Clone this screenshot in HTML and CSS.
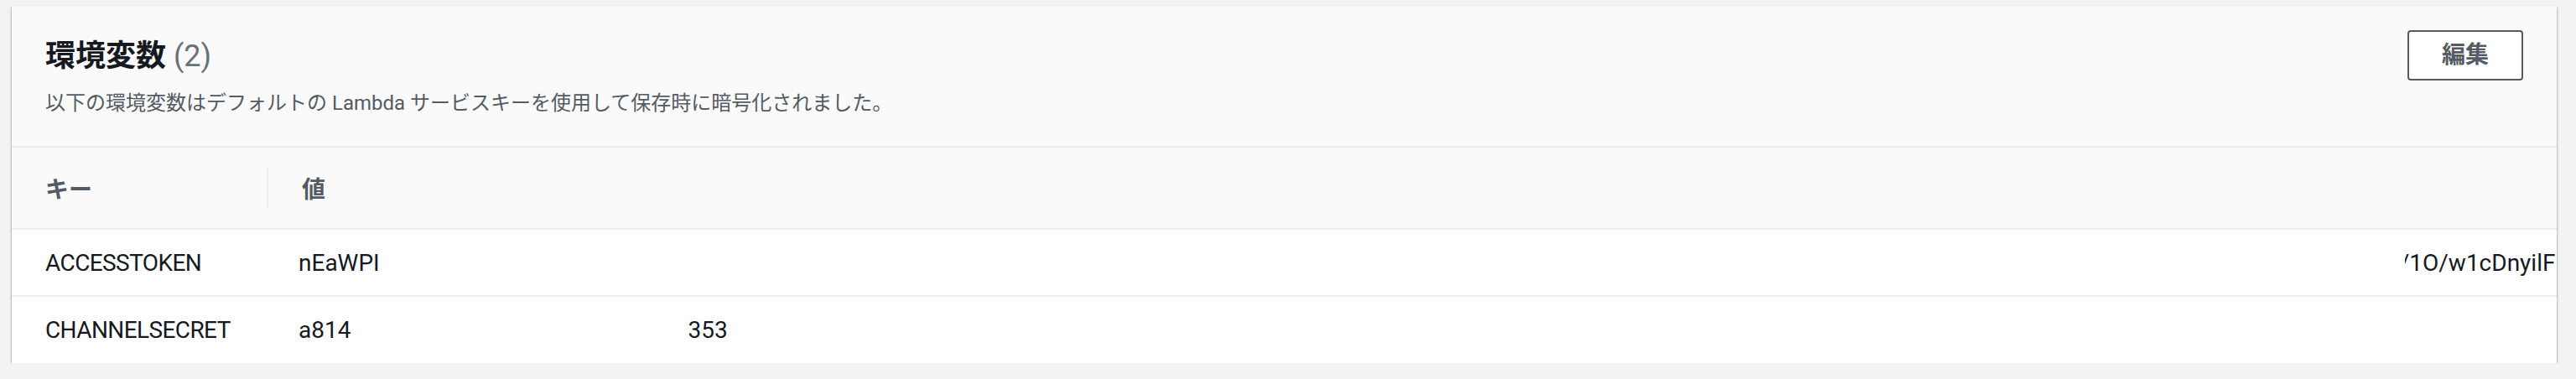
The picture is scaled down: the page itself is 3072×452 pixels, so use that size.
FILE: index.html
```html
<!DOCTYPE html>
<html lang="ja">
<head>
    <meta charset="utf-8">
    <title>環境変数</title>
    <link rel="stylesheet" href="styles.css">
</head>
<body>
    <div class="card">
        <div class="card-header">
            <div class="header-text">
                <h2 class="title">環境変数 <span class="count">(2)</span></h2>
                <p class="description">以下の環境変数はデフォルトの Lambda サービスキーを使用して保存時に暗号化されました。</p>
            </div>
            <button class="btn">編集</button>
        </div>

        <div class="vars-table">
            <div class="th">キー</div>
            <div class="th th-value">値</div>

            <div class="td td-key">ACCESSTOKEN</div>
            <div class="td td-value">
                <span class="piece">nEaWPI</span>
                <span class="piece piece-tail"><span>/1O/w1cDnyilF</span></span>
            </div>

            <div class="td td-key">CHANNELSECRET</div>
            <div class="td td-value">
                <span class="piece">a814</span>
                <span class="piece piece-mid">353</span>
            </div>
        </div>
    </div>
</body>
</html>
```

FILE: styles.css
```css
* {
    margin: 0;
    padding: 0;
    box-sizing: border-box;
}

:root {
    --border-color: #eaeded;
    --text-main: #16191f;
    --text-soft: #545b64;
}

body {
    background-color: #f2f3f3;
    font-family: Roboto, "Noto Sans CJK JP", sans-serif;
    color: var(--text-main);
    padding: 7px 23px 0 14px;
}

.card {
    background-color: #ffffff;
    overflow: hidden;
    box-shadow: 0 2px 2px 0 rgba(0, 28, 36, 0.3),
                1px 1px 2px 0 rgba(0, 28, 36, 0.15),
                -1px 1px 2px 0 rgba(0, 28, 36, 0.15);
}

.card-header {
    display: flex;
    justify-content: space-between;
    align-items: flex-start;
    background-color: #fafafa;
    padding: 29px 40px 31px 40px;
    border-bottom: 2px solid var(--border-color);
}

.title {
    margin-top: 9px;
    font-size: 36px;
    line-height: 44px;
    font-weight: 700;
    color: var(--text-main);
}

.title .count {
    font-weight: 400;
    color: #687078;
}

.description {
    margin-top: 14px;
    font-size: 24px;
    line-height: 40px;
    color: var(--text-soft);
}

.btn {
    height: 60px;
    padding: 0 39px;
    border: 2px solid var(--text-soft);
    border-radius: 4px;
    background-color: #ffffff;
    color: var(--text-soft);
    font-family: inherit;
    font-size: 28px;
    font-weight: 700;
    line-height: 56px;
}

/* table */
.vars-table {
    display: grid;
    grid-template-columns: 304px 1fr;
}

.th {
    display: flex;
    align-items: center;
    height: 98px;
    padding-left: 40px;
    background-color: #fafafa;
    border-bottom: 2px solid var(--border-color);
    font-size: 28px;
    font-weight: 700;
    color: var(--text-soft);
}

.th-value {
    position: relative;
    padding-left: 42px;
}

.th-value::before {
    content: "";
    position: absolute;
    left: 0;
    top: 24px;
    width: 2px;
    height: 48px;
    background-color: var(--border-color);
}

.td {
    display: flex;
    align-items: center;
    height: 79px;
    padding-left: 40px;
    font-size: 28px;
    white-space: nowrap;
    color: var(--text-main);
}

.td-key {
    letter-spacing: -0.6px;
}

.vars-table .td:nth-child(3),
.vars-table .td:nth-child(4) {
    height: 80px;
    border-bottom: 2px solid var(--border-color);
}

.td-value {
    padding-left: 38px;
    overflow: hidden;
}

.piece-mid {
    margin-left: 402px;
}

.piece-tail {
    margin-left: 2415px;
    display: inline-block;
    overflow: hidden;
}

.piece-tail span {
    display: inline-block;
    margin-left: -6px;
}
```
